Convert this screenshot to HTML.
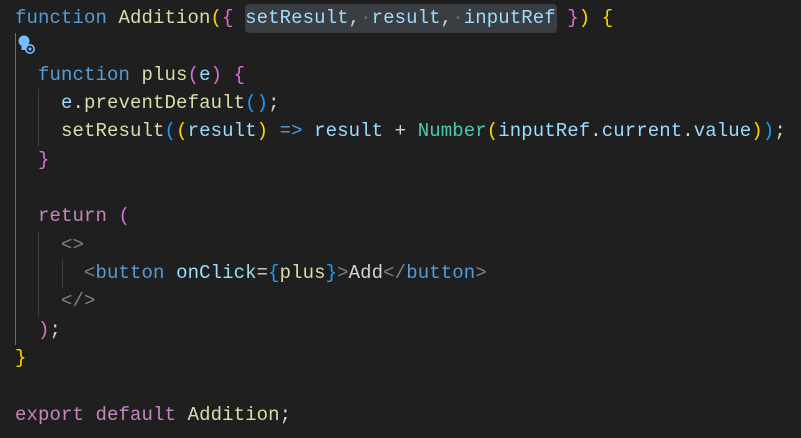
<!DOCTYPE html>
<html><head><style>
html,body{margin:0;padding:0;background:#1f1f1f;width:801px;height:438px;overflow:hidden}
.code{position:absolute;left:15px;top:4px;font-family:"Liberation Mono",monospace;font-size:19px;letter-spacing:0.1px;line-height:28.35px;color:#d4d4d4;white-space:pre}
.k{color:#569cd6}.f{color:#dcdcaa}.v{color:#9cdcfe}.c{color:#c586c0}.t{color:#4ec9b0}.g{color:#808080}
.b1{color:#ffd700}.b2{color:#da70d6}.b3{color:#179fff}
.sel{position:absolute;left:245px;top:4px;width:312px;height:29px;background:#3a3d41;border-radius:4px}
.gd{position:absolute;width:1px;background:#404040}
.dot{color:#6a6a6a}
</style></head><body>
<div class="sel"></div>
<div class="gd" style="left:15px;top:33px;height:312px;background:#6e6e6e"></div>
<div class="gd" style="left:38px;top:89px;height:57px"></div>
<div class="gd" style="left:38px;top:231px;height:86px"></div>
<div class="gd" style="left:62px;top:259px;height:29px"></div>
<svg style="position:absolute;left:17px;top:34px" width="22" height="22" viewBox="0 0 22 22">
<circle cx="7" cy="7" r="5.5" fill="#75beff"/><rect x="4.5" y="12" width="5" height="4" fill="#75beff"/>
<circle cx="13" cy="15" r="4.2" fill="#1f1f1f" stroke="#75beff" stroke-width="1.6"/><circle cx="13" cy="15" r="1.5" fill="#75beff"/>
</svg>
<div class="code"><span class="k">function</span> <span class="f">Addition</span><span class="b1">(</span><span class="b2">{</span> <span class="v">setResult</span>,<span class="dot">·</span><span class="v">result</span>,<span class="dot">·</span><span class="v">inputRef</span> <span class="b2">}</span><span class="b1">)</span> <span class="b1">{</span>

  <span class="k">function</span> <span class="f">plus</span><span class="b2">(</span><span class="v">e</span><span class="b2">)</span> <span class="b2">{</span>
    <span class="v">e</span>.<span class="f">preventDefault</span><span class="b3">()</span>;
    <span class="f">setResult</span><span class="b3">(</span><span class="b1">(</span><span class="v">result</span><span class="b1">)</span> <span class="k">=&gt;</span> <span class="v">result</span> + <span class="t">Number</span><span class="b1">(</span><span class="v">inputRef</span>.<span class="v">current</span>.<span class="v">value</span><span class="b1">)</span><span class="b3">)</span>;
  <span class="b2">}</span>

  <span class="c">return</span> <span class="b2">(</span>
    <span class="g">&lt;&gt;</span>
      <span class="g">&lt;</span><span class="k">button</span> <span class="v">onClick</span>=<span class="b3">{</span><span class="f">plus</span><span class="b3">}</span><span class="g">&gt;</span>Add<span class="g">&lt;/</span><span class="k">button</span><span class="g">&gt;</span>
    <span class="g">&lt;/&gt;</span>
  <span class="b2">)</span>;
<span class="b1">}</span>

<span class="c">export</span> <span class="c">default</span> <span class="f">Addition</span>;</div>
</body></html>
